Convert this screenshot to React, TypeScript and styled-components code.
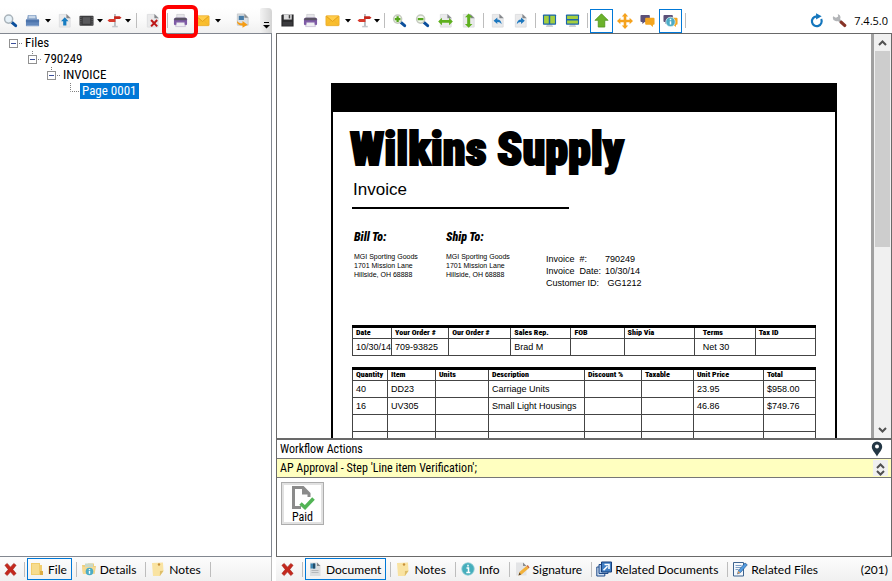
import React from "react";
import styled, { createGlobalStyle } from "styled-components";

const UI = `"Roboto Condensed", "Liberation Sans", Arial, sans-serif`;
const TAB = `Lato, "Open Sans", sans-serif`;
const HEAVY = `"Roboto Condensed", "Liberation Sans", sans-serif`;

const GlobalStyle = createGlobalStyle`
  *, *::before, *::after { box-sizing: border-box; }
  body { margin: 0; background: #fff; color: #000; font-family: ${UI}; font-size: 12px; }
  button { font: inherit; color: inherit; margin: 0; padding: 0; background: none; border: 0; }
  svg { display: block; flex: none; }
`;

/* ---------- Layout ---------- */

const Shell = styled.div`
  display: grid;
  grid-template-columns: 272px minmax(0, 1fr);
  column-gap: 4px;
  height: 100vh;
  overflow: hidden;
`;

const Pane = styled.section`
  display: flex;
  flex-direction: column;
  min-width: 0;
  min-height: 0;
`;

const Toolbar = styled.div`
  display: flex;
  align-items: center;
  flex: none;
  height: 25px;
  margin-top: 8px;
  background: linear-gradient(#fff, #fafafa 50%, #f0f0f0);
`;

const PlainToolbar = styled(Toolbar)`
  background: #fff;
`;

const ToolButton = styled.button<{ $w?: number; $active?: boolean }>`
  display: flex;
  flex: none;
  align-items: center;
  justify-content: center;
  width: ${(p) => p.$w ?? 23}px;
  height: 24px;
  outline: ${(p) => (p.$active ? "1px solid #0078d7" : "none")};
  outline-offset: -1px;
`;

const Sep = styled.span<{ $w?: number }>`
  display: flex;
  flex: none;
  justify-content: center;
  width: ${(p) => p.$w ?? 8}px;
  &::before {
    content: "";
    width: 1px;
    height: 15px;
    background: #bdbdbd;
  }
`;

const Space = styled.span`
  flex: 0 0 8px;
`;

const Push = styled.span`
  flex: 1;
`;

const Version = styled.span`
  margin: 0 4px 0 3px;
  font-family: "Open Sans", sans-serif;
  font-size: 11px;
`;

const Overflow = styled(ToolButton)`
  margin-left: auto;
  align-items: flex-end;
  padding-bottom: 4px;
  height: 25px;
  background: linear-gradient(90deg, #f3f3f3, #d4d4d4);
  border-radius: 2px 4px 0 0;
`;

const Highlighted = styled.span`
  position: relative;
  display: flex;
  &::after {
    content: "";
    position: absolute;
    inset: -4px -8px -5px;
    border: 4px solid #f00;
    border-radius: 6px;
    pointer-events: none;
  }
`;

/* ---------- Tree ---------- */

const TreeBox = styled.div`
  flex: 1;
  padding-top: 1px;
  border: 1px solid #828790;
  border-left: 0;
  font-size: 13px;
`;

const TreeList = styled.ul`
  margin: 0;
  padding: 0;
  list-style: none;
`;

const TreeRow = styled.div<{ $depth: number }>`
  display: flex;
  align-items: center;
  height: 16px;
  padding-left: ${(p) => 9 + p.$depth * 19}px;
`;

const Label = styled.span<{ $selected?: boolean }>`
  padding: 0 2px;
  line-height: 16px;
  white-space: nowrap;
  color: ${(p) => (p.$selected ? "#fff" : "#000")};
  background: ${(p) => (p.$selected ? "#0078d7" : "transparent")};
`;

/* ---------- Document viewer ---------- */

const ViewerFrame = styled.div`
  display: flex;
  flex: 1;
  min-height: 0;
  border: 1px solid #696969;
  border-bottom-width: 2px;
`;

const Canvas = styled.div`
  flex: 1;
  min-width: 0;
  overflow: hidden;
  padding: 49px 34px 0 54px;
`;

const ScrollTrack = styled.div`
  display: flex;
  flex: none;
  flex-direction: column;
  width: 20px;
  border-left: 3px solid #a0a0a0;
  background: #f0f0f0;
`;

const ScrollArrow = styled.button`
  display: flex;
  flex: none;
  align-items: center;
  justify-content: center;
  height: 17px;
`;

const ScrollRun = styled.div`
  flex: 1;
  padding: 0 1px;
`;

const ScrollThumb = styled.div`
  height: 53%;
  background: #cdcdcd;
`;

const Sheet = styled.article`
  height: 640px;
  padding: 12px 19px 0;
  border: solid #000;
  border-width: 29px 2px 2px;
  font-family: "Liberation Sans", Arial, sans-serif;
`;

const Company = styled.h1`
  margin: 0 0 0 -2px;
  font-family: ${HEAVY};
  font-size: 46px;
  font-weight: 900;
  line-height: 50px;
  white-space: nowrap;
  -webkit-text-stroke: 2px #000;
`;

const DocKind = styled.h2`
  width: 217px;
  margin: 0 0 21px;
  padding: 4px 0 5px 1px;
  border-bottom: 2px solid #000;
  font-size: 17px;
  font-weight: 400;
  line-height: 24px;
`;

const Parties = styled.div`
  display: grid;
  grid-template-columns: 92px 100px auto;
  height: 95px;
  padding-left: 2px;
`;

const Party = styled.div`
  font-size: 7px;
  line-height: 9px;
  white-space: nowrap;
`;

const PartyTitle = styled.h3`
  margin: 0 0 8px;
  font-family: ${HEAVY};
  font-size: 12px;
  font-weight: 900;
  font-style: italic;
  line-height: 14px;
`;

const Facts = styled.dl`
  display: grid;
  grid-template-columns: 59px auto;
  align-content: start;
  margin: 23px 0 0;
  font-size: 9px;
  line-height: 12px;
  white-space: pre;
  dd { margin: 0; }
`;

const Table = styled.table<{ $insetCol?: number }>`
  width: 100%;
  margin: 0 0 11px;
  border-collapse: collapse;
  table-layout: fixed;
  border-top: 3px solid #000;
  font-size: 9px;
  th, td {
    overflow: hidden;
    padding: 0 0 0 3px;
    border: 1px solid #444;
    text-align: left;
    white-space: nowrap;
  }
  th {
    height: 12px;
    border-top: 0;
    font-family: ${HEAVY};
    font-size: 8px;
    font-weight: 900;
    line-height: 10px;
  }
  td { height: 17px; line-height: 11px; }
  th:nth-child(${(p) => p.$insetCol ?? 99}),
  td:nth-child(${(p) => p.$insetCol ?? 99}) { padding-left: 8px; }
`;

/* ---------- Workflow ---------- */

const Workflow = styled.div`
  flex: none;
  height: 117px;
  border: solid #696969;
  border-width: 0 1px 1px;
`;

const WorkflowHead = styled.div`
  display: flex;
  align-items: center;
  justify-content: space-between;
  height: 18px;
  padding: 0 8px 0 3px;
`;

const StepBar = styled.div`
  display: flex;
  align-items: center;
  height: 20px;
  padding: 0 3px;
  border: solid #767676;
  border-width: 1px 0;
  background: #ffffc0;
`;

const Spinner = styled.div`
  display: flex;
  flex-direction: column;
  justify-content: space-between;
  align-items: center;
  width: 15px;
  height: 16px;
  margin-left: auto;
  padding: 3px 0 0;
  background: #f0f0f0;
`;

const ActionButton = styled.button`
  && {
    display: flex;
    flex-direction: column;
    align-items: center;
    width: 43px;
    height: 43px;
    margin: 4px;
    border: 1px solid #adadad;
    box-shadow: inset 0 0 0 2px #e1e1e1;
    line-height: 14px;
    padding-top: 2px;
  }
`;

/* ---------- Tabs ---------- */

const TabBar = styled.nav<{ $edge?: boolean }>`
  display: flex;
  align-items: center;
  flex: none;
  height: 24px;
  background: linear-gradient(#fcfcfc, #f0f0f0);
  border-right: ${(p) => (p.$edge ? "1px solid #bbb" : "0")};
  font-family: ${TAB};
  font-size: 12px;
`;

const TabSep = styled.span`
  flex: none;
  width: 1px;
  height: 15px;
  margin: 0 2px 0 4px;
  background: #bdbdbd;
`;

const Tab = styled.button<{ $active?: boolean }>`
  && {
    display: flex;
    align-items: center;
    gap: 3px;
    height: 22px;
    padding: 0 4px 0 1px;
    border: 1px solid ${(p) => (p.$active ? "#0078d7" : "transparent")};
    white-space: nowrap;
  }
`;

const Count = styled.span`
  margin-left: auto;
  padding-right: 4px;
`;

/* ---------- Icons ---------- */

type Kids = { children: React.ReactNode; s?: number };
const Ico = ({ children, s = 15 }: Kids) => (
  <svg width={s} height={s} viewBox="0 0 16 16" aria-hidden="true">{children}</svg>
);

const Caret = () => (
  <svg width="6" height="4" viewBox="0 0 6 4" aria-hidden="true"><path d="M0 0h6L3 3.5z" fill="#000" /></svg>
);

const Lens = ({ kind }: { kind?: "in" | "out" }) => (
  <Ico>
    <path d="M9.500 10l4 3.500" stroke="#0b4f9c" strokeWidth="3.2" strokeLinecap="round" />
    <circle cx="6" cy="6.5" r="4.3" fill={kind ? "#f1f7ea" : "#e6f1f8"} stroke={kind ? "#c5cabf" : "#a9b3ba"} strokeWidth="1.6" />
    {kind && <path d={kind === "in" ? "M3 6.5h6M6 3.5v6" : "M3 6.5h6"} stroke="#55a51c" strokeWidth="2.4" />}
  </Ico>
);
const BlueFolder = () => (
  <Ico>
    <path d="M3 2h9l1 5H2z" fill="#8ba6c9" />
    <path d="M4 3.5h7M4 5h7" stroke="#dce6f2" />
    <path d="M1 7h14v7H1z" fill="#6086bb" /><path d="M1 7h14v3H1z" fill="#4c74ac" />
    <path d="M1.5 13.5h13" stroke="#8fabd0" />
  </Ico>
);
const Sheet16 = ({ children }: { children?: React.ReactNode }) => (
  <Ico>
    <path d="M2.5 1.5h8l3.5 3.5v10h-11.5z" fill="#eaeaeb" stroke="#dddee0" />
    <path d="M10 1l4.5 4.5H10z" fill="#84878b" />
    {children}
  </Ico>
);
const Upload = () => (<Sheet16><path d="M8.3 4.5l4 4.3H10v4.6H6.6V8.8H4.3z" fill="#167cc1" /></Sheet16>);
const Film = () => (
  <Ico>
    <rect x="0.5" y="3" width="15" height="10.5" rx="1" fill="#3b3b3d" />
    <path d="M4 4.5h8v7H4z" fill="#5a5a5d" />
    <path d="M2 4v9M14 4v9" stroke="#77777a" strokeDasharray="1.2 1.2" />
  </Ico>
);
const Sign = () => (
  <Ico>
    <path d="M8.500 1v13" stroke="#b8bdc2" strokeWidth="2" /><path d="M5.500 14.500h6" stroke="#c4c8cc" strokeWidth="1.6" />
    <path d="M7.500 3.500h6L15.500 5l-2 1.500h-6z" fill="#c5261b" />
    <path d="M9 5.500v4H2.500L.5 8l2-1.500H7z" fill="#d93a2d" />
  </Ico>
);
const DeletePage = () => (<Sheet16><path d="M6.5 7.5l6.5 6.8M13 7.5l-6.5 6.8" stroke="#bd1717" strokeWidth="2.2" /></Sheet16>);
const Printer = () => (
  <Ico>
    <path d="M4 1.5h8v5H4z" fill="#e6e6ea" stroke="#c6c6cc" strokeWidth="0.7" />
    <rect x="1" y="5" width="14" height="8" rx="1.6" fill="#7e5aa6" />
    <path d="M1.4 6.4Q2 5 3 5h10q1 0 1.6 1.4v1.2H1.4z" fill="#5a5364" />
    <path d="M4 10h8l1.2 4.5H2.8z" fill="#efeff2" stroke="#b4a6c6" strokeWidth="0.6" />
  </Ico>
);
const Mail = () => (
  <Ico>
    <rect x="1" y="3" width="14" height="10.5" rx="0.8" fill="#f9be2d" stroke="#e8a826" strokeWidth="0.8" />
    <path d="M1.5 3.5L8 9l6.5-5.5" fill="#ffcd4c" stroke="#e09c16" /><path d="M1.5 13l5-5M14.5 13l-5-5" stroke="#eeb030" strokeWidth="0.8" />
  </Ico>
);
const Send = () => (
  <Ico>
    <path d="M2.5 1h8L14 4.5V13H2.5z" fill="#dcdfe2" stroke="#bcc0c4" strokeWidth="0.8" />
    <path d="M4 3h5.5v4.5H4z" fill="#467ca8" /><path d="M10 1l4 4h-4z" fill="#888" />
    <path d="M2 8q1 3 6 3V8.5l5.5 4L8 15.8v-2.4Q2 13.5 2 8z" fill="#f59c14" />
  </Ico>
);
const Save = () => (
  <Ico>
    <path d="M1.5 2.5l1-1h12v13h-13z" fill="#2b2b2d" /><path d="M4 1.5h8.5V7H4z" fill="#dededf" />
    <path d="M9.3 2.2h1.6v3.6H9.3z" fill="#444" /><path d="M3 9.5h10v4H3z" fill="#3b3b3e" />
  </Ico>
);
const FitWidth = () => (<Sheet16><path d="M.2 9l4-4v2.5h7.6V5l4 4-4 4v-2.5H4.2V13z" fill="#5fb01f" /></Sheet16>);
const FitHeight = () => (<Sheet16><path d="M8.2.4l4 4H9.8v7.2h2.4l-4 4-4-4h2.4V4.4H4.2z" fill="#5fb01f" /></Sheet16>);
const TurnLeft = () => (<Sheet16><path d="M3.8 8.2l4-3.4V7Q12 7 12.4 12 11 9.5 7.8 9.6v2z" fill="#1d78bf" /></Sheet16>);
const TurnRight = () => (<Sheet16><path d="M12.6 8.2l-4-3.4V7Q4.4 7 4 12 5.4 9.5 8.6 9.6v2z" fill="#1d78bf" /></Sheet16>);
const Monitor = ({ rows }: { rows?: boolean }) => (
  <Ico>
    <path d="M5.5 12h5l1.5 3H4z" fill="#cfd2d6" />
    <rect x="1" y="1.5" width="14" height="11" rx="0.8" fill="#1b65aa" />
    {rows ? <path d="M2.2 2.8h11.6v3.7H2.2zM2.2 8h11.6v3.2H2.2z" fill="#a5cf3f" /> : <path d="M2.2 2.8h5v8.4h-5zM8.8 2.8h5v8.4h-5z" fill="#a5cf3f" />}
  </Ico>
);
const UpArrow = () => (<Ico><path d="M8 .8l7 7h-3.500V15h-7V7.800H1z" fill="#6cb22b" stroke="#4d9019" strokeWidth="0.8" /></Ico>);
const Move = () => (
  <Ico s={16}><path d="M8 0l3.2 3.4H9.3v3.3h3.3V4.800L16 8l-3.400 3.200V9.300H9.300v3.300h1.900L8 16l-3.200-3.400h1.900V9.300H3.400v1.900L0 8l3.400-3.200v1.900h3.300V3.400H4.800z" fill="#f5a21d" /></Ico>
);
const Bubbles = () => (
  <>
    <path d="M1.500 2h8q1 0 1 1v5.500q0 1-1 1H5L2.500 11.700V9.500h-1q-1 0-1-1V3q0-1 1-1z" fill="#5c5178" />
    <path d="M6.500 5h8q1 0 1 1v5.500q0 1-1 1h-.7v2.300L11 12.500H6.500q-1 0-1-1V6q0-1 1-1z" fill="#f4a51e" />
  </>
);
const InfoDot = () => (
  <>
    <circle cx="8" cy="9.500" r="5" fill="#4cacc6" stroke="#dceff4" strokeWidth="0.8" />
    <path d="M8 8.700v3.600M8 6.200v1.400" stroke="#fff" strokeWidth="1.600" />
  </>
);
const Refresh = () => (
  <Ico><path d="M13 6.500A5.200 5.200 0 1 1 8 3.600" fill="none" stroke="#1476bd" strokeWidth="2.300" /><path d="M7.500 .3l6 3.200-6 3.500z" fill="#1476bd" /></Ico>
);
const Wrench = () => (
  <Ico>
    <path d="M5 5l5 5" stroke="#a9abae" strokeWidth="3" />
    <path d="M1.200 3.500a4 4 0 1 0 5-2.500l.3 3.200-2.300.8z" fill="#b3b5b8" />
    <path d="M10 10l3.500 3.200" stroke="#873327" strokeWidth="3.600" strokeLinecap="round" />
  </Ico>
);
const Cross = () => (<Ico><path d="M2 3.500L4.500 1.500 8 5.500l3.500-4L14 3.500 10.500 8l3.500 4.200-2.500 2.300-3.500-4-3.500 4L2 12.200 5.500 8z" fill="#c4281d" stroke="#a01c14" strokeWidth="0.6" /></Ico>);
const YellowFolder = () => (<Ico s={16}><path d="M2 2h9v2h2v10H2z" fill="#f1cd6d" /><path d="M3 3h7v10H3z" fill="#f7dc8e" /><path d="M11 10h3v4h-3z" fill="#ddac43" /></Ico>);
const FolderInfo = () => (
  <Ico s={16}>
    <path d="M1 4h5l1-1.500h6V5h2l-1.500 8H2z" fill="#f0cf7c" /><path d="M4 2.500h8V6H4z" fill="#c9d9c8" /><path d="M1 6h13l-1 7H2z" fill="#f5da92" />
    <circle cx="8.500" cy="10.500" r="3.800" fill="#4cacc6" /><path d="M8.500 10v2.800M8.500 8v1.200" stroke="#fff" strokeWidth="1.400" />
  </Ico>
);
const Note = () => (<Ico s={16}><path d="M2 2l11-.5.5 8.500-3.500 5H3z" fill="#f9e3a2" /><path d="M9.800 15l.2-5 3.500-.2z" fill="#ddbd6a" /><circle cx="9" cy="3.500" r="1.200" fill="#c7913a" /></Ico>);
const DocPic = () => (
  <Ico s={16}>
    <path d="M3 1.500h7L13.500 5v10H3z" fill="#dcdee0" /><path d="M10 1.500L13.500 5H10z" fill="#84888c" />
    <path d="M3.500 2.500h5v5h-5z" fill="#3b86b4" /><path d="M6 2.500h2v5H6z" fill="#254b67" /><path d="M4.500 9.500h7M4.500 11.500h7" stroke="#b4b7ba" />
  </Ico>
);
const InfoIcon = () => (<Ico s={16}><circle cx="8" cy="8" r="6.200" fill="#46aebc" stroke="#8bccd4" strokeWidth="0.8" /><path d="M6.500 7h2v4.500M6.300 11.500h4M8 3.800v1.700" stroke="#fff" strokeWidth="1.500" fill="none" /></Ico>);
const SignatureIcon = () => (
  <Ico s={16}>
    <path d="M2 1.500h7L12.500 5v9.500H2z" fill="#e3e4e6" /><path d="M9 1.500L12.500 5H9z" fill="#898c90" />
    <path d="M4.500 14.500l1-3.500 7-6 2 2.500-7 6z" fill="#f2b13a" /><path d="M12.500 5l2 2.500 1-1L13.800 4z" fill="#c96b41" /><path d="M4.500 14.500l1-3 1.500 2z" fill="#544432" />
  </Ico>
);
const Stack = () => (
  <Ico s={16}>
    <path d="M.8 6h8v9h-8z" fill="#d3e2f3" stroke="#1f4b89" /><path d="M3 3.500h9v9H3z" fill="#a9c5e6" stroke="#1f4b89" />
    <path d="M5.500 1h10v10h-10z" fill="#3f7ec4" stroke="#173f7b" /><path d="M7.500 9.200l4-4M8.500 3.500h4.500V8" stroke="#fff" strokeWidth="1.600" fill="none" />
  </Ico>
);
const EditFile = () => (
  <Ico s={16}>
    <path d="M1.500 1.500h10v13.500h-10z" fill="#f3f7fc" stroke="#3d638f" />
    <path d="M3.500 4.500h6M3.500 6.500h6M3.500 8.500h3" stroke="#7d9fc5" />
    <path d="M5.500 13l1-3.500 6.500-7.500 2.300 1.800L8.600 11.500z" fill="#519be0" stroke="#1d4d86" strokeWidth="0.600" /><path d="M5.500 13l.8-3 2.100 1.700z" fill="#e0a160" />
  </Ico>
);
const PaidIcon = () => (
  <svg width="24" height="25" viewBox="0 0 24 25" aria-hidden="true">
    <path d="M10 22.500H2.500v-20H12l6 6V12" fill="none" stroke="#8b8b8b" strokeWidth="3" /><path d="M11 1l8.500 8.500H11z" fill="#8b8b8b" />
    <path d="M9.500 18.500l4.500 4 8.500-9" fill="none" stroke="#52b455" strokeWidth="3.600" />
  </svg>
);
const Pin = () => (
  <svg width="12" height="16" viewBox="0 0 12 16" aria-hidden="true">
    <path d="M6 .5a5.200 5.200 0 0 1 5.200 5.200C11.200 9 8 11.500 6 15.500 4 11.500.8 9 .8 5.700A5.200 5.200 0 0 1 6 .5z" fill="#243745" /><circle cx="6" cy="5.500" r="2" fill="#fff" />
  </svg>
);
const Chevron = ({ down }: { down?: boolean }) => (
  <svg width="9" height="6" viewBox="0 0 9 6" aria-hidden="true">
    <path d={down ? "M1 1l3.500 3.500L8 1" : "M1 5l3.500-3.500L8 5"} fill="none" stroke="#505050" strokeWidth="2" />
  </svg>
);
const OverflowMark = () => (
  <svg width="7" height="7" viewBox="0 0 7 7" aria-hidden="true"><path d="M1 .5h5" stroke="#000" /><path d="M0 3h7L3.500 6.500z" fill="#000" /></svg>
);
const TreeMark = ({ stub }: { stub?: boolean }) => (
  <svg width="14" height="16" viewBox="0 0 14 16" aria-hidden="true">
    {stub && <path d="M4.500 0v3" stroke="#808080" strokeDasharray="1 1" />}
    <rect x="0.500" y="4.500" width="8" height="8" fill="#fff" stroke="#919191" />
    <path d="M2 8.500h5" stroke="#3b4f9b" /><path d="M10 8.500h4" stroke="#808080" strokeDasharray="1 1" />
  </svg>
);
const LeafMark = () => (
  <svg width="14" height="16" viewBox="0 0 14 16" aria-hidden="true"><path d="M4.500 0v8.500H14" fill="none" stroke="#808080" strokeDasharray="1 1" /></svg>
);

/* ---------- Data ---------- */

const orderHead = ["Date", "Your Order #", "Our Order #", "Sales Rep.", "FOB", "Ship Via", "Terms", "Tax ID"];
const orderCols = [39, 57, 62, 60, 53, 70, 61, 60];
const orderRows = [["10/30/14", "709-93825", "", "Brad M", "", "", "Net 30", ""]];
const itemHead = ["Quantity", "Item", "Units", "Description", "Discount %", "Taxable", "Unit Price", "Total"];
const itemCols = [35, 48, 53, 96, 57, 52, 70, 52];
const itemRows = [
  ["40", "DD23", "", "Carriage Units", "", "", "23.95", "$958.00"],
  ["16", "UV305", "", "Small Light Housings", "", "", "46.86", "$749.76"],
  ["", "", "", "", "", "", "", ""],
  ["", "", "", "", "", "", "", ""],
  ["", "", "", "", "", "", "", ""],
];

const Grid = ({ head, cols, rows, inset }: { head: string[]; cols: number[]; rows: string[][]; inset?: number }) => {
  const total = cols.reduce((a, b) => a + b, 0);
  return (
    <Table $insetCol={inset}>
      <colgroup>{cols.map((c, i) => <col key={i} style={{ width: `${(c / total) * 100}%` }} />)}</colgroup>
      <thead><tr>{head.map((h) => <th key={h} scope="col">{h}</th>)}</tr></thead>
      <tbody>{rows.map((r, i) => <tr key={i}>{r.map((c, j) => <td key={j}>{c}</td>)}</tr>)}</tbody>
    </Table>
  );
};

const Address = () => (<>MGI Sporting Goods<br />1701 Mission Lane<br />Hillside, OH 68888</>);

const Tool = ({ name, w, active, children }: { name: string; w?: number; active?: boolean; children: React.ReactNode }) => (
  <ToolButton type="button" aria-label={name} $w={w} $active={active}>{children}</ToolButton>
);

export default function App() {
  return (
    <>
      <GlobalStyle />
      <Shell>
        <Pane>
          <Toolbar role="toolbar" aria-label="Files">
            <Tool name="Search" w={20}><Lens /></Tool>
            <Tool name="Open" w={24}><BlueFolder /></Tool>
            <Tool name="Open options" w={8}><Caret /></Tool>
            <Tool name="Upload" w={24}><Upload /></Tool>
            <Tool name="Film" w={20}><Film /></Tool>
            <Tool name="Film options" w={8}><Caret /></Tool>
            <Tool name="Route" w={20}><Sign /></Tool>
            <Tool name="Route options" w={8}><Caret /></Tool>
            <Sep />
            <Tool name="Delete page" w={24}><DeletePage /></Tool>
            <Sep $w={6} />
            <Highlighted><Tool name="Print" w={20}><Printer /></Tool></Highlighted>
            <Tool name="Mail" w={24}><Mail /></Tool>
            <Tool name="Mail options" w={8}><Caret /></Tool>
            <Space />
            <Tool name="Send to" w={24}><Send /></Tool>
            <Overflow type="button" aria-label="More tools" $w={12}><OverflowMark /></Overflow>
          </Toolbar>
          <TreeBox>
            <TreeList>
              <li><TreeRow $depth={0}><TreeMark /><Label>Files</Label></TreeRow></li>
              <li><TreeRow $depth={1}><TreeMark stub /><Label>790249</Label></TreeRow></li>
              <li><TreeRow $depth={2}><TreeMark stub /><Label>INVOICE</Label></TreeRow></li>
              <li><TreeRow $depth={3}><LeafMark /><Label $selected>Page 0001</Label></TreeRow></li>
            </TreeList>
          </TreeBox>
          <TabBar $edge>
            <Tool name="Close" w={20}><Cross /></Tool>
            <TabSep />
            <Tab type="button" $active><YellowFolder />File</Tab>
            <TabSep />
            <Tab type="button"><FolderInfo />Details</Tab>
            <TabSep />
            <Tab type="button"><Note />Notes</Tab>
            <TabSep />
          </TabBar>
        </Pane>

        <Pane>
          <PlainToolbar role="toolbar" aria-label="Document">
            <Tool name="Save"><Save /></Tool>
            <Tool name="Print"><Printer /></Tool>
            <Tool name="Mail" w={20}><Mail /></Tool>
            <Tool name="Mail options" w={12}><Caret /></Tool>
            <Tool name="Route" w={20}><Sign /></Tool>
            <Tool name="Route options" w={6}><Caret /></Tool>
            <Sep />
            <Tool name="Zoom in"><Lens kind="in" /></Tool>
            <Tool name="Zoom out"><Lens kind="out" /></Tool>
            <Tool name="Fit width"><FitWidth /></Tool>
            <Tool name="Fit height"><FitHeight /></Tool>
            <Sep $w={6} />
            <Tool name="Rotate left"><TurnLeft /></Tool>
            <Tool name="Rotate right"><TurnRight /></Tool>
            <Sep $w={6} />
            <Tool name="Split columns"><Monitor /></Tool>
            <Tool name="Split rows"><Monitor rows /></Tool>
            <Sep $w={6} />
            <Tool name="Up" active><UpArrow /></Tool>
            <Tool name="Move"><Move /></Tool>
            <Tool name="Comments"><Ico><Bubbles /></Ico></Tool>
            <Tool name="Comment info" active><Ico><Bubbles /><InfoDot /></Ico></Tool>
            <Sep $w={6} />
            <Push />
            <Tool name="Refresh"><Refresh /></Tool>
            <Tool name="Settings"><Wrench /></Tool>
            <Version>7.4.5.0</Version>
          </PlainToolbar>

          <ViewerFrame>
            <Canvas>
              <Sheet>
                <Company>Wilkins Supply</Company>
                <DocKind>Invoice</DocKind>
                <Parties>
                  <Party><PartyTitle>Bill To:</PartyTitle><Address /></Party>
                  <Party><PartyTitle>Ship To:</PartyTitle><Address /></Party>
                  <Facts>
                    <dt>{"Invoice  #:"}</dt><dd>790249</dd>
                    <dt>{"Invoice  Date:"}</dt><dd>10/30/14</dd>
                    <dt>Customer ID:</dt><dd> GG1212</dd>
                  </Facts>
                </Parties>
                <Grid head={orderHead} cols={orderCols} rows={orderRows} inset={7} />
                <Grid head={itemHead} cols={itemCols} rows={itemRows} />
              </Sheet>
            </Canvas>
            <ScrollTrack>
              <ScrollArrow type="button" aria-label="Scroll up"><Chevron /></ScrollArrow>
              <ScrollRun><ScrollThumb /></ScrollRun>
              <ScrollArrow type="button" aria-label="Scroll down"><Chevron down /></ScrollArrow>
            </ScrollTrack>
          </ViewerFrame>

          <Workflow>
            <WorkflowHead>Workflow Actions<Pin /></WorkflowHead>
            <StepBar>
              AP Approval - Step 'Line item Verification';
              <Spinner><Chevron /><Chevron down /></Spinner>
            </StepBar>
            <ActionButton type="button"><PaidIcon />Paid</ActionButton>
          </Workflow>

          <TabBar>
            <Tool name="Close" w={22}><Cross /></Tool>
            <TabSep />
            <Tab type="button" $active><DocPic />Document</Tab>
            <TabSep />
            <Tab type="button"><Note />Notes</Tab>
            <TabSep />
            <Tab type="button"><InfoIcon />Info</Tab>
            <TabSep />
            <Tab type="button"><SignatureIcon />Signature</Tab>
            <TabSep />
            <Tab type="button"><Stack />Related Documents</Tab>
            <TabSep />
            <Tab type="button"><EditFile />Related Files</Tab>
            <Count>(201)</Count>
          </TabBar>
        </Pane>
      </Shell>
    </>
  );
}
